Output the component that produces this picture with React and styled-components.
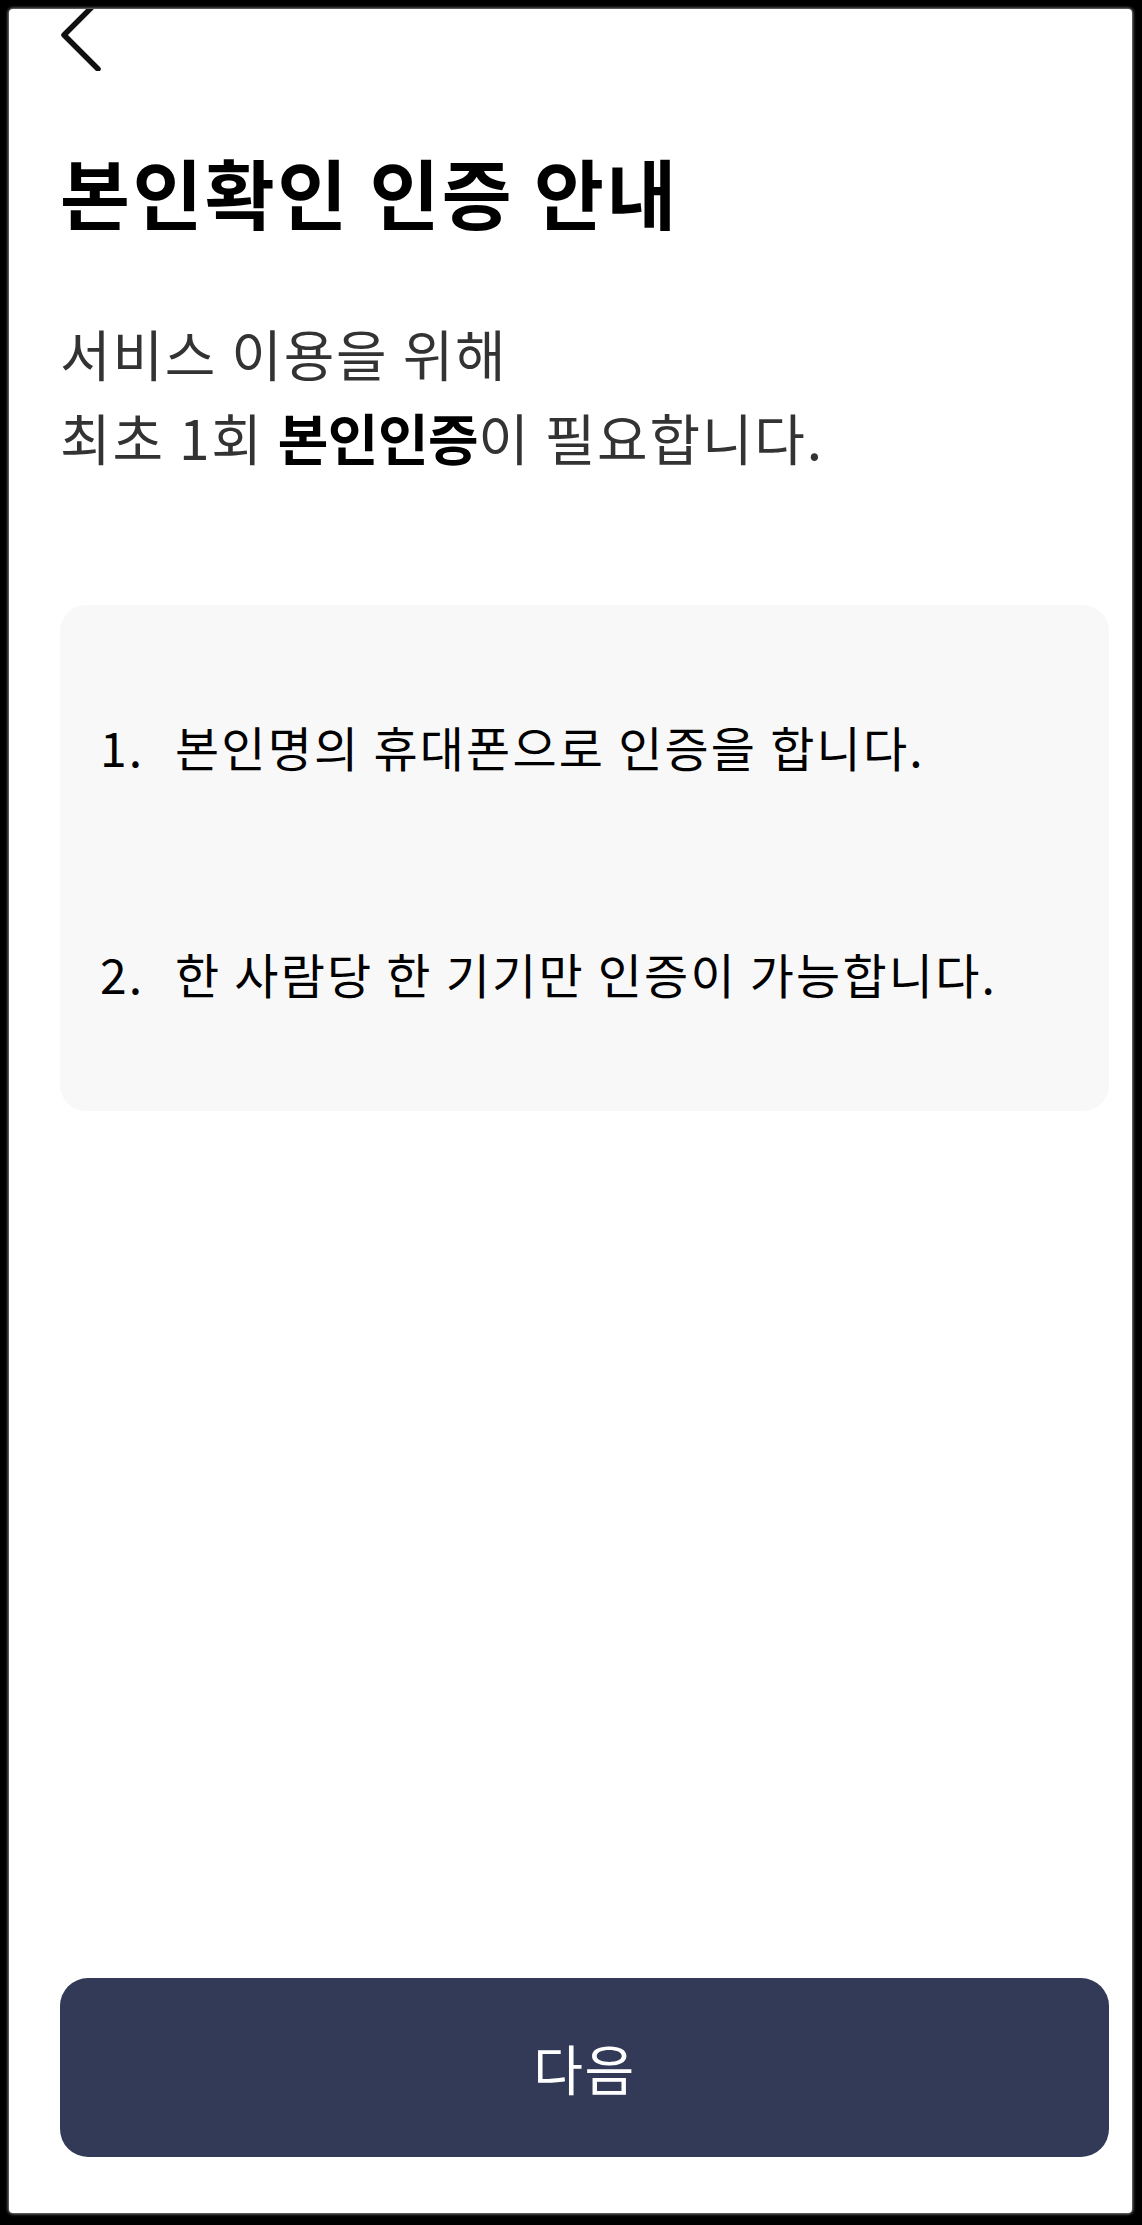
import React from "react";
import styled, { createGlobalStyle } from "styled-components";

const GlobalStyle = createGlobalStyle`
  html, body, #root {
    margin: 0;
    padding: 0;
    height: 100%;
  }
  body {
    background: #000;
    font-family: "Noto Sans CJK KR", "Noto Sans", sans-serif;
    -webkit-font-smoothing: antialiased;
  }
  * { box-sizing: border-box; }
`;

const Frame = styled.div`
  height: 100vh;
  background: #000;
  padding: 9px 10px 12px 9px;
  display: flex;
`;

const Screen = styled.main`
  flex: 1;
  background: #fff;
  border-radius: 4px;
  box-shadow: 0 0 3px 1px #8a8a8a;
  overflow: hidden;
  display: flex;
  flex-direction: column;
  padding: 0 23px 56px 51px;
`;

const Header = styled.header`
  height: 72px;
  margin-top: -10px;
  display: flex;
  align-items: flex-start;
`;

const BackButton = styled.button`
  border: 0;
  padding: 0;
  background: none;
  width: 42px;
  height: 72px;
  cursor: pointer;
  color: #111;
  svg { display: block; }
`;

const Title = styled.h1`
  margin: 70px 0 0;
  font-size: 76px;
  line-height: 100px;
  font-weight: 700;
  letter-spacing: 2.5px;
  color: #000;
`;

const Lead = styled.p`
  margin: 69px 0 0;
  font-size: 55px;
  line-height: 84px;
  font-weight: 400;
  letter-spacing: 1.8px;
  color: #333;
  strong {
    font-weight: 700;
    letter-spacing: -0.5px;
    color: #000;
  }
`;

const NoticeCard = styled.ol`
  list-style: none;
  margin: 127px 0 0;
  padding: 105px 40px 0 40px;
  height: 506px;
  background: #f8f8f8;
  border-radius: 26px;
  display: flex;
  flex-direction: column;
  gap: 155px;
`;

const NoticeItem = styled.li`
  display: grid;
  grid-template-columns: 75px 1fr;
  font-size: 48px;
  line-height: 72px;
  font-weight: 400;
  letter-spacing: 2.2px;
  color: #000;
`;

const Spacer = styled.div`
  flex: 1;
`;

const PrimaryButton = styled.button`
  height: 179px;
  border: 0;
  border-radius: 28px;
  background: #333a57;
  color: #fff;
  font-family: inherit;
  font-size: 54px;
  font-weight: 400;
  letter-spacing: 1.5px;
  cursor: pointer;
`;

const notices = [
  "본인명의 휴대폰으로 인증을 합니다.",
  "한 사람당 한 기기만 인증이 가능합니다.",
];

export default function App() {
  return (
    <>
      <GlobalStyle />
      <Frame>
        <Screen>
          <Header>
            <BackButton aria-label="뒤로">
              <svg width="42" height="72" viewBox="0 0 42 72" fill="none">
                <path
                  d="M38 2 L4 36 L38 70"
                  stroke="currentColor"
                  strokeWidth="5.5"
                  strokeLinecap="round"
                  strokeLinejoin="round"
                />
              </svg>
            </BackButton>
          </Header>
          <Title>본인확인 인증 안내</Title>
          <Lead>
            서비스 이용을 위해
            <br />
            최초 1회 <strong>본인인증</strong>이 필요합니다.
          </Lead>
          <NoticeCard>
            {notices.map((text, i) => (
              <NoticeItem key={i}>
                <span>{i + 1}.</span>
                <span>{text}</span>
              </NoticeItem>
            ))}
          </NoticeCard>
          <Spacer />
          <PrimaryButton>다음</PrimaryButton>
        </Screen>
      </Frame>
    </>
  );
}
